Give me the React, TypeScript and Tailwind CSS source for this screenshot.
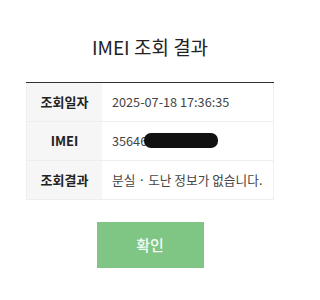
import React from "react";

const font = { fontFamily: '"Noto Sans CJK KR", "Noto Sans", sans-serif' };

export default function App() {
  const rows: [string, React.ReactNode][] = [
    ["조회일자", "2025-07-18 17:36:35"],
    [
      "IMEI",
      <span className="relative inline-flex items-center">
        35646
        <span className="ml-[-3px] inline-block h-[15px] w-[74px] rounded-[7px] bg-[#111] blur-[0.6px]" />
      </span>,
    ],
    ["조회결과", "분실 · 도난 정보가 없습니다."],
  ];
  return (
    <div className="w-[300px] h-[300px] bg-white px-[26px] pt-[33px]" style={font}>
      <div className="text-center text-[19px] leading-[28px] text-[#222]">IMEI 조회 결과</div>
      <div className="mt-[21px] border-t border-[#333]">
        {rows.map(([k, v], i) => (
          <div key={i} className="flex h-[39px] border-b border-x border-[#eeeeee]">
            <div className="flex w-[75px] shrink-0 items-center justify-center bg-[#f6f6f6] text-[13px] font-bold text-[#222]">
              {k}
            </div>
            <div className="flex items-center pl-[10px] text-[12.7px] text-[#444]">{v}</div>
          </div>
        ))}
      </div>
      <div className="mt-[22px] flex justify-center">
        <button className="h-[46px] w-[107px] bg-[#7fc684] text-[15px] font-medium text-[#f4fbf4]">확인</button>
      </div>
    </div>
  );
}
